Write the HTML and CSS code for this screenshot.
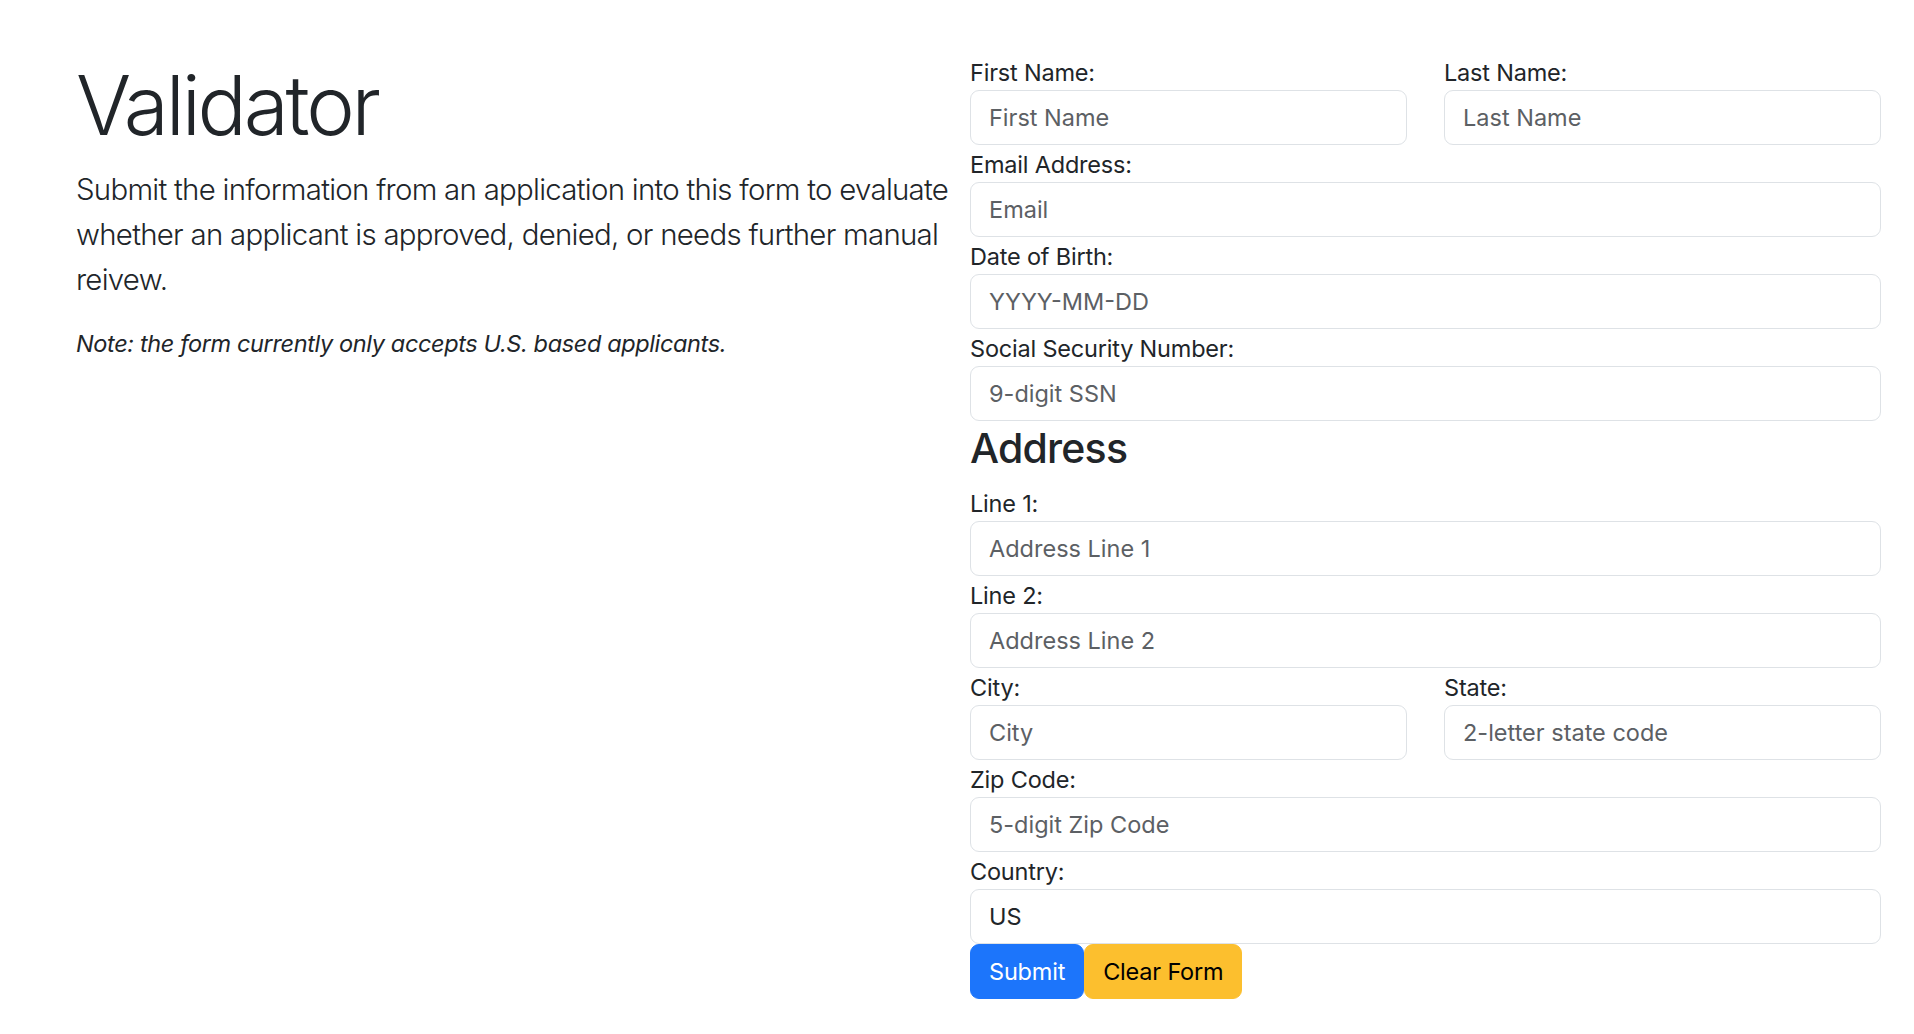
FILE: index.html
```html
<!DOCTYPE html>
<html lang="en">
<head>
<meta charset="utf-8">
<title>Validator</title>
<link rel="stylesheet" href="styles.css">
</head>
<body>
<main class="page">
  <section class="intro">
    <h1 class="title">Validator</h1>
    <p class="lead">Submit the information from an application into this form to evaluate whether an applicant is approved, denied, or needs further manual reivew.</p>
    <p class="note">Note: the form currently only accepts U.S. based applicants.</p>
  </section>
  <form class="form">
    <div class="pair">
      <div class="field">
        <label class="label" for="first">First Name:</label>
        <input class="input" id="first" type="text" placeholder="First Name">
      </div>
      <div class="field">
        <label class="label" for="last">Last Name:</label>
        <input class="input" id="last" type="text" placeholder="Last Name">
      </div>
    </div>
    <div class="field">
      <label class="label" for="email">Email Address:</label>
      <input class="input" id="email" type="text" placeholder="Email">
    </div>
    <div class="field">
      <label class="label" for="dob">Date of Birth:</label>
      <input class="input" id="dob" type="text" placeholder="YYYY-MM-DD">
    </div>
    <div class="field">
      <label class="label" for="ssn">Social Security Number:</label>
      <input class="input" id="ssn" type="text" placeholder="9-digit SSN">
    </div>
    <h3 class="section-title">Address</h3>
    <div class="field">
      <label class="label" for="l1">Line 1:</label>
      <input class="input" id="l1" type="text" placeholder="Address Line 1">
    </div>
    <div class="field">
      <label class="label" for="l2">Line 2:</label>
      <input class="input" id="l2" type="text" placeholder="Address Line 2">
    </div>
    <div class="pair">
      <div class="field">
        <label class="label" for="city">City:</label>
        <input class="input" id="city" type="text" placeholder="City">
      </div>
      <div class="field">
        <label class="label" for="state">State:</label>
        <input class="input" id="state" type="text" placeholder="2-letter state code">
      </div>
    </div>
    <div class="field">
      <label class="label" for="zip">Zip Code:</label>
      <input class="input" id="zip" type="text" placeholder="5-digit Zip Code">
    </div>
    <div class="field field-last">
      <label class="label" for="country">Country:</label>
      <input class="input" id="country" type="text" value="US">
    </div>
    <div class="actions">
      <button class="btn btn-primary" type="button">Submit</button>
      <button class="btn btn-warning" type="button">Clear Form</button>
    </div>
  </form>
</main>
</body>
</html>
```
FILE: styles.css
```css
* { box-sizing: border-box; }

html, body {
  margin: 0;
  padding: 0;
  background: #ffffff;
}

body {
  font-family: Inter, "Noto Sans", "Liberation Sans", sans-serif;
  font-size: 23.5px;
  line-height: 1.5;
  color: #212529;
}

.page {
  display: grid;
  grid-template-columns: 879px 911px;
  column-gap: 15px;
  padding: 54px 0 0 76px;
}

.title {
  margin: 3px 0 12px 0;
  font-size: 82px;
  font-weight: 300;
  line-height: 1.2;
  letter-spacing: -3.2px;
}

.lead {
  margin: 0 0 24px 0;
  font-size: 29.4px;
  font-weight: 300;
  line-height: 45px;
  letter-spacing: -0.72px;
}

.note {
  margin: 0;
  font-style: italic;
  line-height: 35px;
  letter-spacing: -0.37px;
}

.form {
  display: flex;
  flex-direction: column;
  padding-top: 1px;
}

.pair {
  display: grid;
  grid-template-columns: 1fr 1fr;
  column-gap: 37px;
}

.field {
  display: flex;
  flex-direction: column;
  margin-bottom: 2px;
}

.field-last {
  margin-bottom: 0;
}

.label {
  display: block;
  line-height: 35px;
  height: 35px;
  letter-spacing: -0.2px;
}

.input {
  display: block;
  width: 100%;
  height: 55px;
  padding: 0 18px;
  font-family: inherit;
  font-size: 23.5px;
  color: #212529;
  background: #ffffff;
  border: 1.5px solid #dee2e6;
  border-radius: 9px;
  outline: none;
}

.input::placeholder {
  color: #5c6064;
  opacity: 1;
}

.section-title {
  margin: 1px 0 13px 0;
  font-size: 41px;
  font-weight: 500;
  line-height: 49px;
  letter-spacing: -0.8px;
}

.actions {
  display: flex;
}

.btn {
  height: 55px;
  padding: 0 18px;
  font-family: inherit;
  font-size: 23.5px;
  letter-spacing: -0.2px;
  border-radius: 9px;
  border: 1.5px solid transparent;
  cursor: pointer;
}

.btn-primary {
  background: #1c75fb;
  border-color: #1c75fb;
  color: #ffffff;
}

.btn-warning {
  background: #fcbf2e;
  border-color: #fcbf2e;
  color: #000000;
}
```
